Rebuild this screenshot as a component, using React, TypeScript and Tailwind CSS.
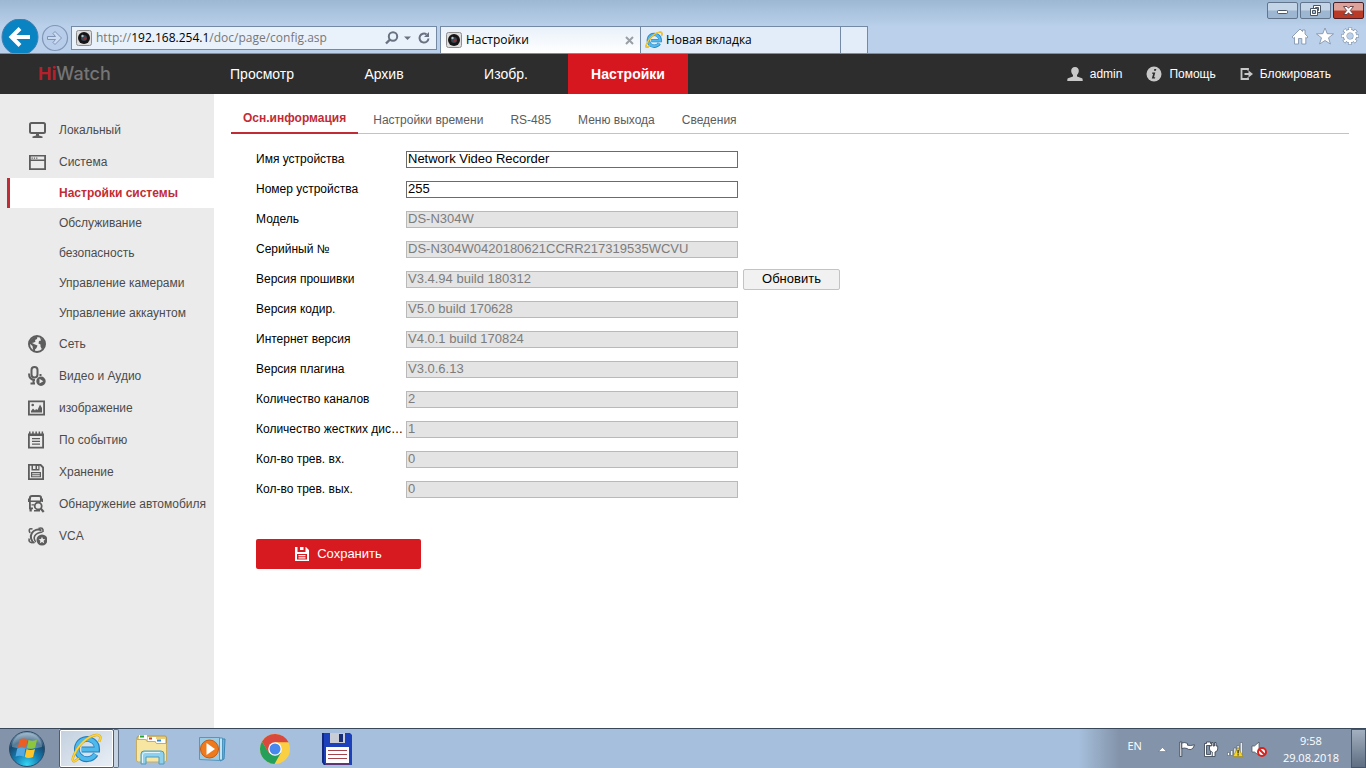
import { useId, type ReactNode } from 'react'

interface MenuItem {
  label: string
  icon: ReactNode
  children?: string[]
}

interface Field {
  label: string
  value: string
  editable?: boolean
  action?: string
}

const NAV = ['Просмотр', 'Архив', 'Изобр.', 'Настройки']
const TABS = ['Осн.информация', 'Настройки времени', 'RS-485', 'Меню выхода', 'Сведения']

const FIELDS: Field[] = [
  { label: 'Имя устройства', value: 'Network Video Recorder', editable: true },
  { label: 'Номер устройства', value: '255', editable: true },
  { label: 'Модель', value: 'DS-N304W' },
  { label: 'Серийный №', value: 'DS-N304W0420180621CCRR217319535WCVU' },
  { label: 'Версия прошивки', value: 'V3.4.94 build 180312', action: 'Обновить' },
  { label: 'Версия кодир.', value: 'V5.0 build 170628' },
  { label: 'Интернет версия', value: 'V4.0.1 build 170824' },
  { label: 'Версия плагина', value: 'V3.0.6.13' },
  { label: 'Количество каналов', value: '2' },
  { label: 'Количество жестких дис…', value: '1' },
  { label: 'Кол-во трев. вх.', value: '0' },
  { label: 'Кол-во трев. вых.', value: '0' },
]

const MENU: MenuItem[] = [
  {
    label: 'Локальный',
    icon: (
      <>
        <rect x="3" y="3" width="15" height="10" rx="1.5" fill="none" stroke="currentColor" strokeWidth="2" />
        <path d="M9 13h3v2.500l3.500 1V18h-10v-1.500l3.500-1z" />
      </>
    ),
  },
  {
    label: 'Система',
    icon: (
      <>
        <path d="M2 3h17v15H2zM3.800 4.600v2.900h13.400V4.600zM3.800 9v7.200h13.400V9z" fillRule="evenodd" />
        <path d="M4.500 5.500h1.300v1.200H4.500zM6.800 5.500h1.300v1.200H6.800zM9.100 5.500h1.300v1.200H9.100z" />
      </>
    ),
    children: ['Настройки системы', 'Обслуживание', 'безопасность', 'Управление камерами', 'Управление аккаунтом'],
  },
  {
    label: 'Сеть',
    icon: (
      <>
        <circle cx="10" cy="10" r="8" fill="none" stroke="currentColor" strokeWidth="2" />
        <path d="M2.500 8C4 4.500 7 2.500 10.500 2.500L10 5 8 6l.500 1.500L7 8.500 5 9l3 1.500 2.500 1-1 2.500-1.500 1.500V18L6 15.500 5.500 12 2.500 9.500z" />
        <path d="M13 3.500l3 2 1.800 3.500-.300 3.500-2.500 3-1.500-3v-2l-2-1 .5-2.500 2-.500z" />
      </>
    ),
  },
  {
    label: 'Видео и Аудио',
    icon: (
      <>
        <rect x="4.500" y="1" width="6" height="10.500" rx="3" fill="none" stroke="currentColor" strokeWidth="2" />
        <path d="M2 7.500c0 4 2 6.300 6 6.500M6.500 14v4M3.500 17.500H8M13.500 8v2" fill="none" stroke="currentColor" strokeWidth="2" />
        <path d="M14 10.500a4.700 4.700 0 1 0 0 9.400 4.700 4.700 0 0 0 0-9.400zm-1.500 2.200 3.800 2.500-3.800 2.300z" fillRule="evenodd" />
      </>
    ),
  },
  {
    label: 'изображение',
    icon: (
      <>
        <path d="M1 2.500h17v15H1zM2.800 4.300v11.400h13.400V4.300z" fillRule="evenodd" />
        <circle cx="5.700" cy="7" r="1.300" />
        <path d="M4 14.500v-1.500l2-2.500 2 2 1-1.500 1.500 1L13 6.500l2 3.500v4.500z" />
      </>
    ),
  },
  {
    label: 'По событию',
    icon: (
      <>
        <path d="M1 3.500h16v15H1zM2.800 6v10.700h12.400V6z" fillRule="evenodd" />
        <path d="M2 1.500h1.500v3H2zM5.200 1.500h1.500v3H5.200zM8.400 1.500h1.500v3H8.400zM11.600 1.500h1.500v3h-1.500zM14.600 1.500h1.500v3h-1.500z" />
        <path d="M5 8h8v1.200H5zM5 10.800h8V12H5zM5 13.600h8v1.200H5z" />
      </>
    ),
  },
  {
    label: 'Хранение',
    icon: (
      <>
        <path d="M1 2h13l3 3v13H1zM2.800 3.800v12.400h12.400V6l-2.200-2.200z" fillRule="evenodd" />
        <path d="M4.500 3h8v5.500h-8zM6 3v4h2.500V3zM10 4v3h1.300V4z" fillRule="evenodd" />
        <path d="M4 10h10v5.300H4zM5.200 11.200v1h7.600v-1zM5.200 13.300v.900h7.600v-.900z" fillRule="evenodd" />
      </>
    ),
  },
  {
    label: 'Обнаружение автомобиля',
    icon: (
      <>
        <path d="M3 5V3.500Q3 2 5 2h7q2 0 2 1.500V7" fill="none" stroke="currentColor" strokeWidth="2" />
        <path d="M1 4.500h1.200V8H1zM14.800 4.500H16V8h-1.200zM2 4h1.800v11H2zM3 6.500h11.500V8H3zM2 13.500h4v1.800H2zM2.500 15h2.300v2.500H2.500zM4.500 10.300H7v1.300H4.500zM7 16h6v1.600H7z" />
        <circle cx="11.200" cy="12" r="3.500" fill="#ebebeb" stroke="currentColor" strokeWidth="1.800" />
        <path d="M13.700 14.500l3 3.500" stroke="currentColor" strokeWidth="2.200" />
      </>
    ),
  },
  {
    label: 'VCA',
    icon: (
      <>
        <path d="M14.500 4.500A7 7 0 1 0 7.500 17" fill="none" stroke="currentColor" strokeWidth="2" />
        <path d="M9 16C5.500 12 7 7 15.500 6M3 7C1.500 4 2 2 5.500 3M2.200 12.500c-.7 3 .8 4.500 3.800 4M11.500 2.500c3.500-1.300 5 0 4.500 3.500" fill="none" stroke="currentColor" strokeWidth="1.600" />
        <circle cx="15" cy="14" r="6.300" fill="#ebebeb" />
        <path d="M15 8.500a5.500 5.500 0 1 0 0 11 5.500 5.500 0 0 0 0-11zm0 2.300 1 2.200 2.300.200-1.700 1.600.500 2.400-2.100-1.300-2.100 1.300.500-2.400-1.700-1.600 2.300-.200z" fillRule="evenodd" />
      </>
    ),
  },
]

export default function App() {
  return (
    <div className="flex min-h-screen flex-col bg-white font-['Liberation_Sans',Arial,sans-serif] text-xs text-black">
      <BrowserBar />
      <TopNav />
      <div className="flex flex-1">
        <Sidebar />
        <Settings />
      </div>
      <Taskbar />
    </div>
  )
}

function BrowserBar() {
  return (
    <header className="flex h-[54px] items-end overflow-hidden border-b border-[#7d8ea3] bg-linear-to-b from-[#9db8d3] to-[#bad0eb] to-50% font-['Open_Sans','Noto_Sans',sans-serif] text-[12px]">
      <div className="flex w-[71px] shrink-0 self-end">
        <button aria-label="Назад">
          <svg width="40" height="34" viewBox="0 0 40 34">
            <circle cx="20" cy="18" r="18" fill="#0a83c3" stroke="#3f7fae" />
            <path d="M30 18H12M20 9.500 11.500 18l8.500 8.500" fill="none" stroke="#fff" strokeWidth="4" />
          </svg>
        </button>
        <button aria-label="Вперед">
          <svg width="30" height="34" viewBox="0 0 30 34">
            <circle cx="15" cy="19" r="12.500" fill="#b7cdea" stroke="#8196b5" strokeWidth="1.200" />
            <path d="M7.500 17.500h8L13 14.500l2-2 6.500 6.500-6.500 6.500-2-2 2.500-3h-8z" fill="#cbdcf2" stroke="#7f95b5" strokeLinejoin="round" />
          </svg>
        </button>
      </div>

      <div className="mb-[3px] flex h-6 w-[366px] shrink-0 items-center border border-[#7489a3] bg-[#e9f1fb] px-1">
        <CameraIcon />
        <div role="textbox" aria-label="Адрес" className="flex-1 truncate pl-1 text-[12px] text-[#777]">
          http://<span className="text-black">192.168.254.1</span>/doc/page/config.asp
        </div>
        <button aria-label="Поиск" className="flex">
          <svg width="28" height="16" viewBox="0 0 28 16" fill="none" stroke="#687280">
            <circle cx="9" cy="6.500" r="4.200" strokeWidth="2" />
            <path d="M6 9.500 2 13.500" strokeWidth="2.400" />
            <path d="M20 6.500h7L23.500 10z" fill="#687280" stroke="none" />
          </svg>
        </button>
        <button aria-label="Обновить страницу" className="ml-1 flex">
          <svg width="16" height="16" viewBox="0 0 16 16">
            <path d="M12.500 8.500A4.500 4.500 0 1 1 10.500 4.300" fill="none" stroke="#687280" strokeWidth="2" />
            <path d="M13 2v5H8z" fill="#687280" />
          </svg>
        </button>
      </div>

      <div role="tablist" className="ml-[3px] flex h-[27px] border border-b-0 border-[#7489a3]">
        <div className="flex w-[200px] items-center border-r border-[#7489a3] bg-linear-to-b from-[#e9f1fa] to-white pr-1.5 pl-[5px]">
          <CameraIcon />
          <button role="tab" aria-selected="true" className="flex-1 pl-1 text-left">
            Настройки
          </button>
          <button aria-label="Закрыть вкладку">
            <svg width="9" height="9" viewBox="0 0 9 9" stroke="#9a9fa6" strokeWidth="2">
              <path d="M1 1l7 7M8 1 1 8" />
            </svg>
          </button>
        </div>
        <button role="tab" aria-selected="false" className="flex w-[200px] items-center gap-[3px] border-r border-[#7489a3] bg-[#e2edf9] pl-1">
          <IeIcon size={18} />
          Новая вкладка
        </button>
        <button aria-label="Новая вкладка" className="w-[26px] bg-[#e2edf9]" />
      </div>

      <div className="ml-auto flex flex-col items-end gap-2 self-start pt-0.5 pr-0.5">
        <div className="flex gap-0.5">
          <WindowButton label="Свернуть">
            <rect x="10.500" y="8.500" width="10" height="3" rx="1" fill="#fff" stroke="#4b5563" />
          </WindowButton>
          <WindowButton label="Восстановить">
            <g fill="#fff" stroke="#4b5563">
              <path d="M13.500 3.500h7v7h-7z" />
              <path d="M15.500 5.500h3v3h-3z" fill="#a9c0da" />
              <path d="M10.500 6.500h7v7h-7z" />
              <path d="M12.500 8.500h3v3h-3z" fill="#a9c0da" />
            </g>
          </WindowButton>
          <WindowButton label="Закрыть" danger>
            <path d="M10.500 4.500h3.500l1.500 1.800L17 4.500h3.500l-3.200 4 3.200 4H17l-1.500-1.800-1.500 1.800h-3.500l3.200-4z" fill="#fff" stroke="#5b3b43" strokeWidth=".9" />
          </WindowButton>
        </div>
        <div className="flex gap-[7px] pr-[5px]">
          <button aria-label="Домашняя страница">
            <svg width="18" height="18" viewBox="0 0 18 18" fill="#fff" stroke="#7b8da6" strokeWidth=".8" strokeLinejoin="round">
              <path d="M1 10 9 2l2.500 2.500V3H14v4l3 3-1.200 1.200-1-.9v6.700h-4V11.500H7.500V17h-4v-6.700l-1.200.9z" />
            </svg>
          </button>
          <button aria-label="Избранное">
            <svg width="18" height="18" viewBox="0 0 18 18" fill="#fff" stroke="#7b8da6" strokeWidth=".8" strokeLinejoin="round">
              <path d="M9 1l2.200 5.700 6.300.2-5 3.900 1.900 6.200L9 13.500 3.600 17l1.900-6.200-5-3.900 6.300-.2z" />
            </svg>
          </button>
          <button aria-label="Сервис">
            <svg width="18" height="18" viewBox="0 0 18 18" fill="none">
              <circle cx="9" cy="9" r="7" stroke="#7b8da6" strokeWidth="3.600" strokeDasharray="3.300 2.198" strokeDashoffset="1.650" />
              <circle cx="9" cy="9" r="5" stroke="#7b8da6" strokeWidth="4" />
              <circle cx="9" cy="9" r="7" stroke="#fff" strokeWidth="2.600" strokeDasharray="2.300 3.198" strokeDashoffset="1.150" />
              <circle cx="9" cy="9" r="4.900" stroke="#fff" strokeWidth="2.800" />
            </svg>
          </button>
        </div>
      </div>
    </header>
  )
}

function WindowButton({ label, danger, children }: { label: string; danger?: boolean; children: ReactNode }) {
  return (
    <button
      aria-label={label}
      className={
        danger
          ? 'h-[17px] w-[31px] rounded-[2px] border border-[#4c1d22] bg-linear-to-b from-[#dda39b] from-45% to-[#b93a26] to-55%'
          : 'h-[17px] w-[31px] rounded-[2px] border border-[#63758d] bg-linear-to-b from-[#c4d5e8] from-45% to-[#9db6d1] to-55%'
      }
    >
      <svg width="29" height="15" viewBox="1 1 29 15">
        {children}
      </svg>
    </button>
  )
}

function CameraIcon() {
  return (
    <svg className="shrink-0" width="16" height="16" viewBox="0 0 16 16">
      <rect x=".5" y=".5" width="15" height="15" rx="2" fill="#dcdcdc" stroke="#8e8e8e" />
      <circle cx="8" cy="8" r="6" fill="#151515" />
      <circle cx="8" cy="8" r="3" fill="#394550" />
      <circle cx="9" cy="8.500" r="1.500" fill="#8d2f33" />
      <circle cx="6.500" cy="6" r="1.200" fill="#a9c3cc" />
    </svg>
  )
}

function IeIcon({ size }: { size: number }) {
  return (
    <svg className="shrink-0" width={size} height={size} viewBox="0 0 32 32" fill="none">
      <path d="M25.500 22A10.500 10.500 0 1 1 27 17H11" stroke="#1e7fc0" strokeWidth="6" />
      <path d="M25.200 22A10.300 10.300 0 1 1 26.700 17H11" stroke="#4fb9ec" strokeWidth="4" />
      <path d="M8 26c-5 5-8 4-5-3C7 13 17 3 26 2c5-.5 5 3 3 7" stroke="#d9a514" strokeWidth="2.600" />
      <path d="M8 26c-5 5-8 4-5-3C7 13 17 3 26 2c5-.5 5 3 3 7" stroke="#fbd53f" strokeWidth="1.600" />
    </svg>
  )
}

function TopNav() {
  return (
    <div className="flex h-10 items-center bg-[#2d2d2d] text-white">
      <div className="w-[202px] shrink-0 pl-[38px] font-['Inter',sans-serif] text-[18px] leading-10 font-medium text-[#757575]">
        <span className="font-bold text-[#b5202a]">Hi</span>Watch
      </div>
      <nav className="flex gap-0.5 text-center text-sm leading-10">
        {NAV.map((item) => (
          <a key={item} href="#" className={item === 'Настройки' ? 'w-[120px] bg-[#d7171f] font-bold' : 'w-[120px]'}>
            {item}
          </a>
        ))}
      </nav>
      <div className="ml-auto flex gap-6 pr-[35px]">
        <a href="#" className="flex items-center gap-[7px]">
          <svg width="16" height="16" viewBox="0 0 16 16" fill="#c8c8c8">
            <path d="M8 1c2.500 0 4 1.700 3.800 4-.1 1.800-.9 3-1.800 4v1.500l5 1.700q.7.300.7 1.800v1H.300v-1q0-1.500.7-1.800l5-1.700V9C5 8 4.300 6.800 4.200 5 4 2.700 5.500 1 8 1z" />
          </svg>
          admin
        </a>
        <a href="#" className="flex items-center gap-[7px]">
          <svg width="16" height="16" viewBox="0 0 16 16">
            <circle cx="8" cy="8" r="7.500" fill="#c8c8c8" />
            <path d="M8.300 3h2l-.4 1.700h-2zM6.300 6.500h3L8 11.200h1.200L9 12.500H5.800l1.400-4.800H6z" fill="#2d2d2d" />
          </svg>
          Помощь
        </a>
        <a href="#" className="flex items-center gap-[7px]">
          <svg width="13" height="14" viewBox="0 0 13 14" fill="none" stroke="#c8c8c8">
            <path d="M8 3.500V2H1.500v10H8v-1.500" strokeWidth="1.800" />
            <path d="M4.500 7h5" strokeWidth="2" />
            <path d="M8.500 3.500 13 7l-4.500 3.500z" fill="#c8c8c8" stroke="none" />
          </svg>
          Блокировать
        </a>
      </div>
    </div>
  )
}

function Sidebar() {
  return (
    <aside className="w-[214px] shrink-0 bg-[#ebebeb] pt-5 text-[#4b4b4b]">
      <ul>
        {MENU.map((item) => (
          <li key={item.label}>
            <a href="#" className="flex h-8 items-center gap-3 pl-[27px] whitespace-nowrap">
              <svg className="shrink-0 text-[#5d5d5d]" width="20" height="20" viewBox="0 0 20 20" fill="currentColor">
                {item.icon}
              </svg>
              {item.label}
            </a>
            {item.children && (
              <ul className="pl-[7px] leading-[30px]">
                {item.children.map((child, i) => (
                  <li key={child}>
                    <a
                      href="#"
                      className={
                        i === 0
                          ? 'block border-l-[3px] border-[#bf2c36] bg-white pl-[49px] font-bold text-[#bf2c36]'
                          : 'block pl-[52px]'
                      }
                    >
                      {child}
                    </a>
                  </li>
                ))}
              </ul>
            )}
          </li>
        ))}
      </ul>
    </aside>
  )
}

function Settings() {
  return (
    <main className="min-w-0 flex-1 pt-3 pr-[17px] pl-[17px]">
      <div role="tablist" className="flex h-7 items-end gap-[3px] border-b border-[#c3c3c3] text-[#5c5c5c]">
        {TABS.map((tab, i) => (
          <button
            key={tab}
            role="tab"
            aria-selected={i === 0}
            className={
              i === 0
                ? '-mb-px h-7 border-b-2 border-[#bf2c36] px-3 pb-0.5 font-bold text-[#bf2c36]'
                : 'h-7 px-3 pt-0.5'
            }
          >
            {tab}
          </button>
        ))}
      </div>

      <form className="pt-[10px] pl-[25px]" onSubmit={(e) => e.preventDefault()}>
        {FIELDS.map((field) => (
          <FieldRow key={field.label} {...field} />
        ))}
        <button className="mt-[35px] flex h-[30px] w-[165px] items-center justify-center gap-2 rounded-[2px] bg-[#d71a20] text-[13px] text-white">
          <svg width="14" height="14" viewBox="0 0 14 14" fill="#fff">
            <path d="M0 0h2.500v5h8V0H11l3 3v11H0zM2 7v5.500h10V7z" fillRule="evenodd" />
            <path d="M5 0h3.500v3H5zM3.500 8h7v1.200h-7zM3.500 10.300h7v1.200h-7z" />
          </svg>
          Сохранить
        </button>
      </form>
    </main>
  )
}

function FieldRow({ label, value, editable, action }: Field) {
  const id = useId()
  return (
    <div className="flex h-[30px] items-center">
      <label htmlFor={id} className="w-[150px] shrink-0 whitespace-nowrap">
        {label}
      </label>
      <input
        id={id}
        defaultValue={value}
        disabled={!editable}
        className="h-[17px] w-[332px] border border-[#6b6b6b] bg-white px-px text-[13px] disabled:border-[#b9b9b9] disabled:bg-[#e4e4e4] disabled:text-[#7c7c7c]"
      />
      {action && (
        <button type="button" className="ml-[5px] h-[21px] w-[97px] rounded-[2px] border border-[#c3c3c3] bg-[#f1f1f1] text-[13px]">
          {action}
        </button>
      )}
    </div>
  )
}

function Taskbar() {
  return (
    <footer className="flex h-10 items-stretch border-t border-[#39475a] bg-[#a6bfdc] font-['Open_Sans','Noto_Sans',sans-serif] text-[11px] text-white">
      <button aria-label="Пуск" className="flex w-[59px] items-center bg-[#8394aa] pl-2">
        <StartOrb />
      </button>
      <button aria-label="Internet Explorer" className="flex w-[55px] items-center justify-center rounded-[2px] border border-[#4c5c71] bg-linear-to-br from-[#c3d0df] to-[#e9eff6] shadow-[inset_0_0_0_1px_#fff]">
        <IeIcon size={31} />
      </button>
      <div className="w-[5px] rounded-r-[2px] border border-l-0 border-[#5d6e85] bg-[#c4d2e2]" />
      <div className="flex items-center gap-[30px] pl-4">
        <button aria-label="Проводник">
          <svg width="33" height="32" viewBox="0 0 33 32">
            <path d="M2 5q0-2 2-2h26q1.500 0 1.500 2v8H2z" fill="#e9cf79" stroke="#b39a4e" />
            <path d="M4 2h8v4H4zM13 4h8v4h-8zM21 6h9v4h-9z" fill="#fff" />
            <path d="M5 2.500h4v2H5z" fill="#27a52d" />
            <path d="M14 4.500h3v2h-3z" fill="#cc432e" />
            <path d="M22 6.500h4v2h-4z" fill="#3389cf" />
            <path d="M1.500 6.500h9l1.500 2h8l1.500 2h10V27q0 2-2 2H3.500q-2 0-2-2z" fill="#f6e6a2" stroke="#c7ad61" />
            <path d="M6 31V21q0-3 3-3h17q3 0 3 3v10h-5v-7H11v7z" fill="#8fd0ec" stroke="#4a9cc4" />
            <path d="M7.500 30v-8q0-2.500 2.500-2.500h15" fill="none" stroke="#dff5ff" />
          </svg>
        </button>
        <button aria-label="Проигрыватель Windows Media">
          <svg width="31" height="28" viewBox="0 0 31 28">
            <path d="M23 4h4l-1 20-4 2z" fill="#6ab2d8" stroke="#3a85b4" />
            <path d="M20 3h4.500v22H20z" fill="#bfe3f3" stroke="#4b94bd" />
            <path d="M1.500 2.500h20v23l-20-1z" fill="#9ccbe4" stroke="#5796bd" />
            <circle cx="11.500" cy="14" r="9" fill="#ef7a1e" stroke="#c8590e" />
            <path d="M8.500 8v12l8.500-6z" fill="#fff" />
          </svg>
        </button>
        <button aria-label="Google Chrome">
          <svg width="32" height="32" viewBox="0 0 32 32">
            <circle cx="16" cy="16" r="15" fill="#fbcf42" />
            <path d="M3 8.500A15 15 0 0 0 15.500 31L22 19.500 16 16 9.500 19z" fill="#24a05a" />
            <path d="M3 8.500 9.800 20 16 9.300h13.500A15 15 0 0 0 3 8.500z" fill="#d9493d" />
            <circle cx="16" cy="16" r="6.800" fill="#fff" />
            <circle cx="16" cy="16" r="5.500" fill="#4788ee" />
          </svg>
        </button>
        <button aria-label="Total Commander">
          <svg width="32" height="32" viewBox="0 0 32 32">
            <path d="M1 0h28l2 2v30H3l-2-3z" fill="#1d41ba" />
            <path d="M1 0h2v29l2 3H3l-2-3z" fill="#122879" />
            <path d="M9 0h15v10H9z" fill="#c9ced6" />
            <path d="M18 1h4v8h-4z" fill="#1b2e73" />
            <path d="M5 14h23v16H5z" fill="#fff" />
            <path d="M7 17.500h19M7 21.500h19M7 25.500h19" stroke="#a5434c" />
            <path d="M4 30h25v1.500H4z" fill="#9c2430" />
          </svg>
        </button>
      </div>

      <div className="ml-auto flex items-center bg-linear-to-r from-[#a6bfdc] to-[#8394aa] to-[40px] pr-3 pl-[48px]">
        <span className="pb-1">EN</span>
        <div className="flex items-center gap-2 pl-4">
          <button aria-label="Показать скрытые значки">
            <svg width="9" height="16" viewBox="0 0 9 16">
              <path d="M.5 10.500 4.500 6.500l4 4z" fill="#fff" stroke="#566579" strokeWidth=".5" />
            </svg>
          </button>
          <svg className="ml-1" width="16" height="16" viewBox="0 0 16 16" fill="#fff" stroke="#333d4b" strokeWidth=".8">
            <path d="M.8 1h2v14.500h-2z" />
            <path d="M2.800 2Q6 .8 8.500 2.500v1.700q3 .8 7-.4-1 4-3.500 4.700-3 .3-4-1-2.500-1-5.200 0z" />
          </svg>
          <svg width="16" height="16" viewBox="0 0 16 16" fill="#fff" stroke="#333d4b" strokeWidth=".8">
            <path d="M1.500 2.500h2v-1.500h4v1.500h2v13h-8z" />
            <path d="M3.500 4.500h4v9h-4z" fill="#8394aa" />
            <path d="M8.500 1.500V5H6.500v3q0 2.500 2.700 3v4.500H12V11q2.700-.5 2.700-3V5h-1.700V1.500h-1.500V5H10V1.500z" />
          </svg>
          <svg width="16" height="16" viewBox="0 0 16 16">
            <path d="M.5 11.500h2v3h-2zM3.700 9.500h2v5h-2zM6.900 7h2v7.500h-2zM10.100 4.500h2v10h-2zM13.300 1.500h2v13h-2z" fill="#fff" stroke="#404b59" strokeWidth=".5" />
            <path d="M11 6.500 16 15.500H6z" fill="#f8d824" stroke="#9b8310" strokeWidth=".6" />
            <path d="M10.500 9h1.200v3.500h-1.200zM10.500 13.300h1.200v1.200h-1.200z" fill="#222" />
          </svg>
          <svg width="16" height="16" viewBox="0 0 16 16">
            <path d="M1 5h2.500L8 1v13.500L3.500 11H1z" fill="#fff" stroke="#404b59" strokeWidth=".7" />
            <circle cx="11" cy="11" r="4" fill="#fff" stroke="#d8231f" strokeWidth="2" />
            <path d="M8.200 8.200 13.800 13.800" stroke="#d8231f" strokeWidth="2" />
          </svg>
        </div>
        <time className="pl-4 text-center leading-[17px]">
          9:58
          <br />
          29.08.2018
        </time>
      </div>
      <button aria-label="Свернуть все окна" className="w-[15px] border border-[#48566a] bg-linear-to-b from-[#a3b0c0] to-[#5f6e82]" />
    </footer>
  )
}

function StartOrb() {
  return (
    <svg width="38" height="38" viewBox="0 0 38 38">
      <defs>
        <radialGradient id="orb" cx=".5" cy=".95" r=".9">
          <stop offset="0" stopColor="#35d5f5" />
          <stop offset=".4" stopColor="#1580b4" />
          <stop offset=".75" stopColor="#17486f" />
          <stop offset="1" stopColor="#7d9cb5" />
        </radialGradient>
      </defs>
      <circle cx="19" cy="19" r="17.500" fill="url(#orb)" stroke="#2e4c68" />
      <path d="M4 17A15 14 0 0 1 34 17Q19 21 4 17z" fill="#fff" opacity=".28" />
      <path d="M11.500 9.500q4-2 8 0l-1.600 8q-3.800-2-8-.2z" fill="#ec5d24" />
      <path d="M20.500 10q4 1.700 8.500-.3l-1.800 8q-4.200 2-8.200.1z" fill="#8cc63d" />
      <path d="M9.200 18.500q4-1.800 8.300.1l-1.700 8.200q-3.800-2-8.300-.2z" fill="#54a9e2" />
      <path d="M18.500 19q4.200 1.800 8.500-.1l-1.900 8q-4.200 2-8.300.2z" fill="#fcc62b" />
    </svg>
  )
}
